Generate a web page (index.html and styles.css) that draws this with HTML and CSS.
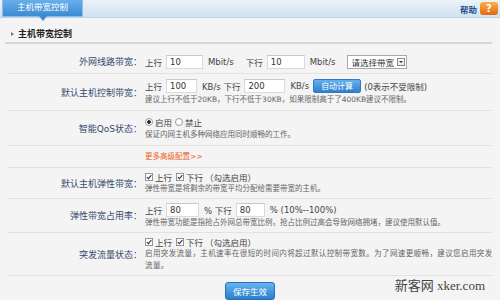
FILE: index.html
```html
<!DOCTYPE html>
<html lang="zh-CN">

<head>
  <meta charset="UTF-8" />
  <title>主机带宽控制</title>
  <link rel="stylesheet" href="styles.css">
</head>

<body>
  <div class="topbar">
    <div class="tab">主机带宽控制</div>
    <div class="help">帮助<span class="help-icon">?</span></div>
  </div>

  <h2 class="section-title"><span class="arrow"></span>主机带宽控制</h2>

  <div class="form">
    <div class="row">
      <div class="label">外网线路带宽：</div>
      <div class="field">
        <div class="line">
          <span>上行</span><input class="num w37" value="10"><span>Mbit/s</span>
          <span class="next">下行</span><input class="num w38" value="10"><span>Mbit/s</span>
          <span class="select">请选择带宽<i class="caret"></i></span>
        </div>
      </div>
    </div>

    <div class="row">
      <div class="label">默认主机控制带宽：</div>
      <div class="field">
        <div class="line">
          <span>上行</span><input class="num w31" value="100"><span>KB/s 下行</span><input class="num w41" value="200"><span>KB/s</span>
          <button class="btn-calc">自动计算</button><span class="hint">(0表示不受限制)</span>
        </div>
        <div class="note">建议上行不低于20KB，下行不低于30KB，如果限制高于了400KB建议不限制。</div>
      </div>
    </div>

    <div class="row">
      <div class="label">智能QoS状态：</div>
      <div class="field">
        <div class="line text">
          <span class="radio checked"></span><span>启用</span>
          <span class="radio"></span><span>禁止</span>
        </div>
        <div class="note">保证内网主机多种网络应用同时顺畅的工作。</div>
      </div>
    </div>

    <div class="row">
      <div class="label"></div>
      <div class="field">
        <div class="note more">更多高级配置&gt;&gt;</div>
      </div>
    </div>

    <div class="row tight">
      <div class="label">默认主机弹性带宽：</div>
      <div class="field">
        <div class="line text">
          <svg class="check" viewBox="0 0 9 9"><rect x=".5" y=".5" width="8" height="8" fill="#fff" stroke="#8a8a8a"/><path d="M2 4.6l1.8 1.8L7.2 2.4" fill="none" stroke="#333" stroke-width="1.2"/></svg><span>上行</span>
          <svg class="check" viewBox="0 0 9 9"><rect x=".5" y=".5" width="8" height="8" fill="#fff" stroke="#8a8a8a"/><path d="M2 4.6l1.8 1.8L7.2 2.4" fill="none" stroke="#333" stroke-width="1.2"/></svg><span>下行</span>
          <span class="paren">（勾选启用）</span>
        </div>
        <div class="note">弹性带宽是将剩余的带宽平均分配给需要带宽的主机。</div>
      </div>
    </div>

    <div class="row tight">
      <div class="label">弹性带宽占用率：</div>
      <div class="field">
        <div class="line">
          <span>上行</span><input class="num w33" value="80"><span>% 下行</span><input class="num w29" value="80"><span>% (10%--100%)</span>
        </div>
        <div class="note">弹性带宽功能是指抢占外网总带宽比例，抢占比例过高会导致网络拥堵，建议使用默认值。</div>
      </div>
    </div>

    <div class="row tight">
      <div class="label">突发流量状态：</div>
      <div class="field">
        <div class="line text">
          <svg class="check" viewBox="0 0 9 9"><rect x=".5" y=".5" width="8" height="8" fill="#fff" stroke="#8a8a8a"/><path d="M2 4.6l1.8 1.8L7.2 2.4" fill="none" stroke="#333" stroke-width="1.2"/></svg><span>上行</span>
          <svg class="check" viewBox="0 0 9 9"><rect x=".5" y=".5" width="8" height="8" fill="#fff" stroke="#8a8a8a"/><path d="M2 4.6l1.8 1.8L7.2 2.4" fill="none" stroke="#333" stroke-width="1.2"/></svg><span>下行</span>
          <span class="paren">（勾选启用）</span>
        </div>
        <div class="note wide">启用突发流量，主机速率在很短的时间内将超过默认控制带宽数。为了网速更顺畅，建议您启用突发<br>流量。</div>
      </div>
    </div>
  </div>

  <div class="actions">
    <button class="btn-save">保存生效</button>
    <div class="watermark">新客网 xker.com</div>
  </div>
</body>

</html>
```

FILE: styles.css
```css
body {
  margin: 0;
  background: #f4f4f4;
  font-family: "DejaVu Sans", "Noto Sans CJK SC", sans-serif;
  font-size: 8.5px;
  color: #444;
}

/* top bar */
.topbar {
  height: 17px;
  padding: 0 2px;
  display: flex;
  justify-content: space-between;
  background: linear-gradient(#ebf2fa, #d2e1f1);
  border-bottom: 1px solid #bfd3e8;
}

.tab {
  position: relative;
  width: 81px;
  height: 17px;
  box-sizing: border-box;
  border: 1px solid #8cc0ec;
  border-top: none;
  background: linear-gradient(#67b0ea, #3d8ad4);
  color: #fff;
  text-align: center;
  line-height: 15px;
}

.tab::after {
  content: "";
  position: absolute;
  left: 50%;
  top: 100%;
  margin-left: -4px;
  border-left: 4px solid transparent;
  border-right: 4px solid transparent;
  border-top: 5px solid #3d8ad4;
}

.help {
  display: flex;
  align-items: center;
  gap: 3px;
  font-weight: bold;
  color: #1d4f8c;
}

.help-icon {
  width: 18px;
  height: 13px;
  border-radius: 3px;
  background: linear-gradient(#f9b24a, #e06812);
  color: #fff;
  font-size: 10px;
  line-height: 13px;
  text-align: center;
}

/* section title */
.section-title {
  margin: 10px 8px 0 5px;
  padding: 0 0 2px 6px;
  border-bottom: 2px solid #d6d6d6;
  display: flex;
  align-items: center;
  gap: 4px;
  font-size: 9px;
  line-height: 12px;
  color: #222;
}

.arrow {
  border-left: 3px solid #777;
  border-top: 2.5px solid transparent;
  border-bottom: 2.5px solid transparent;
}

/* form rows */
.form {
  margin: 6px 8px 0;
}

.row {
  display: flex;
  align-items: center;
  padding: 4px 0;
  border-bottom: 1px solid #e2e2e2;
}

.row.tight {
  padding: 3px 0;
}

.label {
  flex: none;
  width: 134px;
  text-align: right;
  font-size: 9px;
  color: #34496e;
}

.field {
  padding-left: 3px;
}

.line {
  display: flex;
  align-items: center;
  height: 15px;
  white-space: nowrap;
}

.line.text {
  height: 13px;
}

.tight .line.text {
  height: 12px;
}

.num {
  height: 14px;
  margin: 0 5px 0 4px;
  padding: 0 3px;
  box-sizing: border-box;
  border: 1px solid #dadada;
  border-top-color: #c9c9c9;
  background: #fff;
  font: inherit;
  color: #333;
}

.w29 { width: 29px; }
.w31 { width: 31px; }
.w33 { width: 33px; }
.w37 { width: 37px; }
.w38 { width: 38px; }
.w41 { width: 41px; }

.next {
  margin-left: 12px;
}

.select {
  margin-left: 12px;
  width: 60px;
  height: 14px;
  box-sizing: border-box;
  padding-left: 3px;
  border: 1px solid #a8a8a8;
  background: #fff;
  color: #333;
  display: flex;
  align-items: center;
  justify-content: space-between;
}

.caret {
  width: 8px;
  height: 8px;
  margin-right: 1px;
  box-sizing: border-box;
  border: 1px solid #888;
  background: linear-gradient(#fff, #e4e4e4);
  display: flex;
  align-items: center;
  justify-content: center;
}

.caret::before {
  content: "";
  border-left: 2px solid transparent;
  border-right: 2px solid transparent;
  border-top: 2.5px solid #333;
}

.btn-calc {
  margin-left: 4px;
  width: 48px;
  height: 14px;
  padding: 0;
  border: 1px solid #3378c0;
  border-radius: 2px;
  background: linear-gradient(#63b0ee, #2f80cc);
  color: #fff;
  font: inherit;
  font-size: 8px;
}

.hint {
  margin-left: 3px;
}

.radio {
  width: 6px;
  height: 6px;
  margin-right: 2px;
  border: 1px solid #999;
  border-radius: 50%;
  background: #fff;
}

.radio.checked {
  background: radial-gradient(#333 40%, #fff 50%);
}

.radio + span + .radio {
  margin-left: 3px;
}

.check {
  width: 8px;
  height: 8px;
  margin-right: 2px;
}

span + .check {
  margin-left: 4px;
}

.paren {
  margin-left: 2px;
}

.note {
  font-size: 7.5px;
  line-height: 13px;
  color: #666;
}

.tight .note {
  line-height: 12px;
}

.note.wide {
  letter-spacing: 0.4px;
  white-space: nowrap;
}

.note.more {
  color: #ea6320;
}

/* footer */
.actions {
  position: relative;
  display: flex;
  justify-content: center;
  padding-top: 6px;
}

.btn-save {
  width: 50px;
  height: 18px;
  padding: 0;
  border: 1px solid #2a6fb5;
  border-radius: 3px;
  background: linear-gradient(#66b4f0, #2a7fcc);
  color: #fff;
  font: inherit;
}

.watermark {
  position: absolute;
  right: 15px;
  top: -1px;
  font-family: "Liberation Serif", "Noto Sans CJK SC", serif;
  font-size: 13px;
  color: #444;
}
```
